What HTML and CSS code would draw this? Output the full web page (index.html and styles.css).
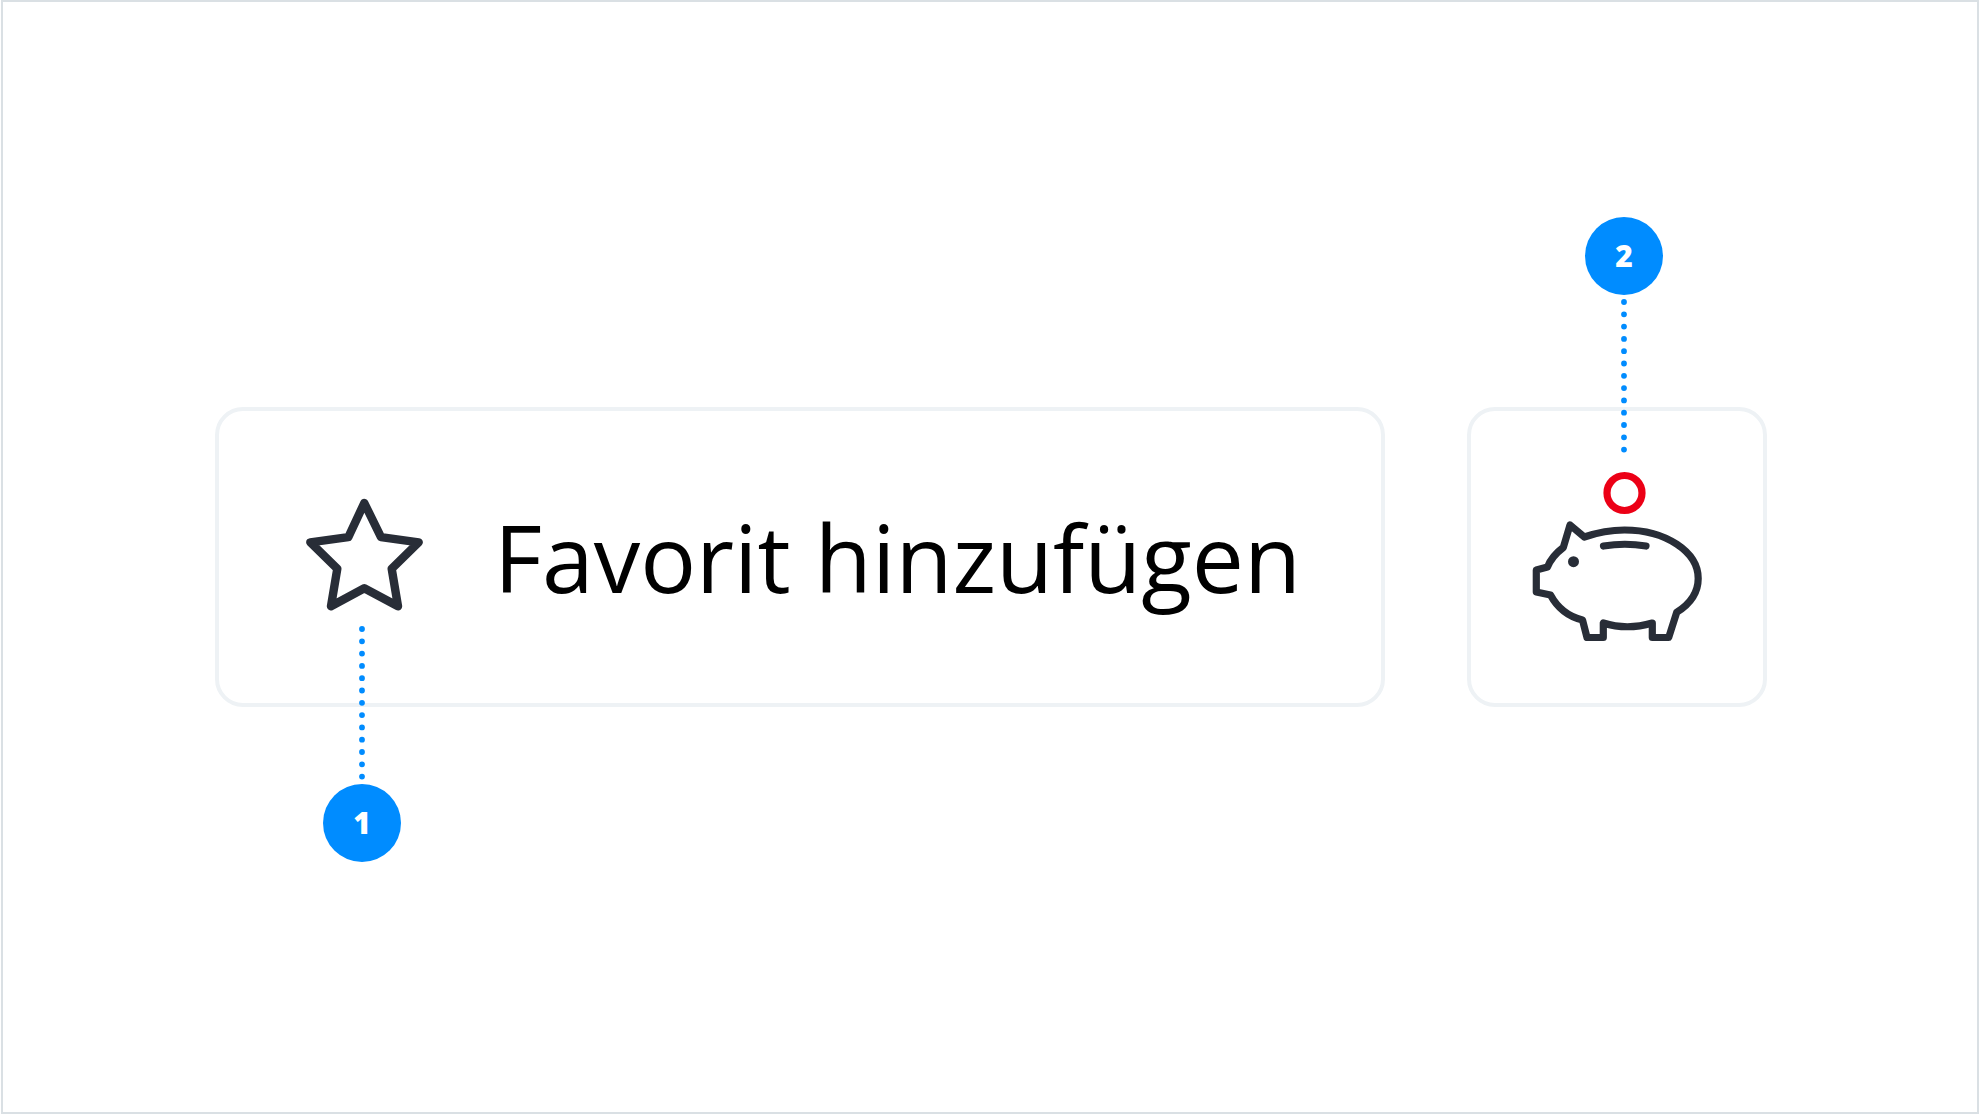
FILE: index.html
```html
<!DOCTYPE html>
<html lang="de">
<head>
    <meta charset="UTF-8">
    <meta name="viewport" content="width=device-width, initial-scale=1.0">
    <title>Favorit hinzufügen</title>
    <link rel="stylesheet" href="styles.css">
</head>
<body>
    <main class="stage">
        <button type="button" class="card card-wide">
            <span class="icon">
                <svg class="star" viewBox="0 0 120 120" aria-hidden="true">
                    <path d="M60.3 6 77 40.2 114.7 45.3 87.7 71.7 94 109.3 60.3 91.3 27 109.3 33.3 71.7 6.3 45.3 44.3 40.2Z" />
                </svg>
                <span class="callout callout-below">
                    <svg class="dots" viewBox="0 0 6 154" aria-hidden="true"><path d="M3 3V152" /></svg>
                    <span class="badge">1</span>
                </span>
            </span>
            <span class="label">Favorit hinzufügen</span>
        </button>

        <button type="button" class="card card-icon" aria-label="Sparschwein">
            <span class="icon">
                <svg class="pig" viewBox="0 0 180 180" aria-hidden="true">
                    <path d="M43 58 57.3 70C69 66 83 63 97.5 63C139 63 171.2 85 171.2 111.5C171.2 125 163 137 149.7 145.3L141.7 170.5H125.3V156Q100 163.5 76.3 156V170.5H60L55.5 153C41 149.5 30 140 23.5 128L9.3 125V103L20.5 100C23 93.5 29 86 36.3 80.5Z" />
                    <path d="M76.5 79Q98 75.5 119 79" />
                    <circle class="eye" cx="46.5" cy="94.7" r="5.5" />
                    <circle class="coin" cx="97.5" cy="26" r="17.5" />
                </svg>
                <span class="callout callout-above">
                    <span class="badge">2</span>
                    <svg class="dots" viewBox="0 0 6 154" aria-hidden="true"><path d="M3 3V152" /></svg>
                </span>
            </span>
        </button>
    </main>
</body>
</html>
```
FILE: styles.css
```css
* {
    box-sizing: border-box;
}

body {
    display: flex;
    min-height: 100vh;
    margin: 0;
    padding: 0 0 1px 1px;
    font-family: "Open Sans", "Noto Sans", sans-serif;
    background: #fff;
}

.stage {
    flex: 1;
    display: flex;
    align-items: center;
    gap: 82px;
    padding: 0 210px 0 212px;
    border: 2px solid #dae0e4;
}

.card {
    display: flex;
    align-items: center;
    height: 300px;
    padding: 0;
    border: 4px solid #eef2f5;
    border-radius: 28px;
    background: #fff;
    color: #000;
    font-family: inherit;
    cursor: pointer;
}

.card-wide {
    flex: 1;
    gap: 70px;
    padding-left: 85px;
}

.card-icon {
    flex: 0 0 300px;
    justify-content: center;
}

.label {
    font-size: 93px;
    font-weight: 500;
    line-height: 120px;
    white-space: nowrap;
}

.icon {
    position: relative;
    display: block;
}

.icon svg {
    display: block;
    fill: none;
    stroke: #282d37;
    stroke-linecap: round;
    stroke-linejoin: round;
}

.icon .star {
    width: 120px;
    height: 120px;
    stroke-width: 8.4;
}

.icon .pig {
    width: 180px;
    height: 180px;
    stroke-width: 7.2;
}

.icon .eye {
    fill: #282d37;
    stroke: none;
}

.icon .coin {
    stroke: #ec0016;
}

/* numbered markers that lie over the cards */
.callout {
    position: absolute;
    display: flex;
    flex-direction: column;
    align-items: center;
    gap: 4px;
}

.callout-below {
    top: 129px;
    left: 19px;
}

.callout-above {
    bottom: 194px;
    left: 58px;
}

.icon .dots {
    width: 6px;
    height: 154px;
    stroke: #008cff;
    stroke-width: 5.8;
    stroke-dasharray: 0 12.3;
}

.badge {
    width: 78px;
    height: 78px;
    border-radius: 50%;
    background: #008cff;
    color: #fff;
    font-size: 30px;
    font-weight: 800;
    line-height: 78px;
    text-align: center;
}
```
